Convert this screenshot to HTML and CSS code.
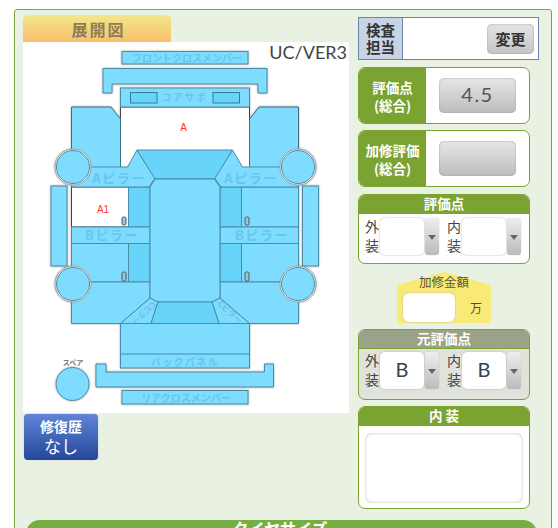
FILE: index.html
```html
<!DOCTYPE html>
<html lang="ja">
<head>
<meta charset="utf-8">
<title>展開図</title>
<link rel="stylesheet" href="styles.css">
</head>
<body>
<div class="panel">
  <div class="top">
    <div class="left">
      <div class="tab">展開図</div>
      <div class="diagram">
        <span class="ver">UC/VER3</span>
        <svg class="car" viewBox="23 42 326 371" width="326" height="371">
          <g class="parts">
            <rect x="122" y="51.5" width="126" height="12.5"/>
            <polygon points="103,68.5 267,68.5 267,93 258,93 258,84 112,84 112,93 103,93"/>
            <rect class="white" x="120.5" y="107" width="129" height="62"/>
            <rect x="120.5" y="88" width="129" height="19"/>
            <rect class="inner" x="130.5" y="92.5" width="26.5" height="10.5"/>
            <rect class="inner" x="213" y="92.5" width="26.5" height="10.5"/>
            <polygon class="edge" points="71.5,107 111,107 120.5,119 120.5,170 71.5,170"/>
            <polygon class="edge" points="298.5,107 259,107 249.5,119 249.5,170 298.5,170"/>
            <rect class="white" x="71.5" y="187" width="57" height="40"/>
            <rect x="241.5" y="187" width="57" height="40"/>
            <rect class="dark" x="128.5" y="187" width="21.5" height="40"/>
            <rect class="dark" x="220" y="187" width="21.5" height="40"/>
            <rect x="71.5" y="227" width="78.5" height="16.5"/>
            <rect x="220" y="227" width="78.5" height="16.5"/>
            <rect x="71.5" y="243.5" width="57" height="38.5"/>
            <rect x="241.5" y="243.5" width="57" height="38.5"/>
            <rect class="dark" x="128.5" y="243.5" width="21.5" height="38.5"/>
            <rect class="dark" x="220" y="243.5" width="21.5" height="38.5"/>
            <polygon points="71.5,282 150,282 150,298 120.5,323.5 71.5,323.5"/>
            <polygon points="298.5,282 220,282 220,298 249.5,323.5 298.5,323.5"/>
            <polygon points="71.5,167 127.5,167 137,150 155,178 149,187 71.5,187"/>
            <polygon points="298.5,167 242.5,167 232.5,150 214.5,178 221,187 298.5,187"/>
            <polygon class="dark" points="137,150 232.5,150 214.5,179 155,179"/>
            <polygon points="150,187 155,179 214.5,179 220,187 220,298 212,302 158,302 150,298"/>
            <polygon points="150,298 158,302 151,323.5 120.5,323.5"/>
            <polygon points="220,298 212,302 219,323.5 249.5,323.5"/>
            <polygon class="dark" points="158,302 212,302 219,323.5 151,323.5"/>
            <rect x="120.5" y="323.5" width="129" height="44.5"/>
            <line x1="120.5" y1="354" x2="249.5" y2="354"/>
            <polygon points="96,364 106,364 106,372 264.5,372 264.5,364 273.5,364 273.5,387 96,387"/>
            <rect x="122" y="390.5" width="126" height="13.5"/>
            <rect x="51" y="186" width="16" height="80"/>
            <rect x="302.5" y="186" width="16" height="80"/>
            <circle class="halo" cx="73" cy="167" r="18"/>
            <circle class="halo" cx="298" cy="167" r="18"/>
            <circle class="halo" cx="73" cy="284" r="18"/>
            <circle class="halo" cx="298" cy="284" r="18"/>
            <circle cx="73" cy="167" r="16.500"/>
            <circle cx="298" cy="167" r="16.500"/>
            <circle cx="73" cy="284" r="16.500"/>
            <circle cx="298" cy="284" r="16.500"/>
            <circle cx="72.5" cy="384" r="16.5"/>
            <rect class="knob" x="122" y="217" width="4" height="8" rx="1.500"/>
            <rect class="knob" x="245" y="217" width="4" height="8" rx="1.500"/>
            <rect class="knob" x="122" y="272" width="4" height="9" rx="1.500"/>
            <rect class="knob" x="245" y="272" width="4" height="9" rx="1.500"/>
          </g>
          <g class="labels">
            <text x="187" y="62" class="s10">フロントクロスメンバー</text>
            <text x="184.500" y="101" class="s10 wide">コアサポ</text>
            <text x="119" y="183" class="s13 wide">Aピラー</text>
            <text x="251" y="183" class="s13 wide">Aピラー</text>
            <text x="112" y="240" class="s13 wide">Bピラー</text>
            <text x="262" y="240" class="s13 wide">Bピラー</text>
            <text x="185" y="366" class="s10 wide">バックパネル</text>
            <text x="186" y="402" class="s10">リアクロスメンバー</text>
            <text x="142" y="311" class="s7" transform="rotate(138 142 311)">Cピラー</text>
            <text x="228" y="314" class="s7" transform="rotate(42 228 314)">Cピラー</text>
            <text x="73" y="365" class="spare">スペア</text>
          </g>
          <text x="183.500" y="131" class="mark">A</text>
          <text x="103" y="213" class="mark">A1</text>
        </svg>
      </div>
      <div class="repair"><b>修復歴</b><span>なし</span></div>
    </div>
    <div class="right">
      <div class="inspect">
        <div class="inspect-head">検査<br>担当</div>
        <div class="inspect-body"><div class="change">変更</div></div>
      </div>
      <div class="score">
        <div class="score-head">評価点<br>(総合)</div>
        <div class="score-body"><div class="score-btn">4.5</div></div>
      </div>
      <div class="score">
        <div class="score-head">加修評価<br>(総合)</div>
        <div class="score-body"><div class="score-btn"></div></div>
      </div>
      <div class="box">
        <div class="box-head">評価点</div>
        <div class="selects">
          <div class="field"><span class="side">外<br>装</span><div class="pick"><div class="value"></div><div class="arrow"></div></div></div>
          <div class="field"><span class="side">内<br>装</span><div class="pick"><div class="value"></div><div class="arrow"></div></div></div>
        </div>
      </div>
      <div class="amount">
        <svg class="house" viewBox="0 0 94 51" width="94" height="51"><polygon points="0,13 47,0 94,13 94,51 0,51"/></svg>
        <div class="amount-title">加修金額</div>
        <div class="amount-row"><div class="amount-input"></div><span>万</span></div>
      </div>
      <div class="box old">
        <div class="box-head">元評価点</div>
        <div class="selects">
          <div class="field"><span class="side">外<br>装</span><div class="pick"><div class="value">B</div><div class="arrow"></div></div></div>
          <div class="field"><span class="side">内<br>装</span><div class="pick"><div class="value">B</div><div class="arrow"></div></div></div>
        </div>
      </div>
      <div class="box interior">
        <div class="box-head">内 装</div>
        <div class="memo"></div>
      </div>
    </div>
  </div>
  <div class="tire">タイヤサイズ</div>
</div>
</body>
</html>
```
FILE: styles.css
```css
html, body { margin: 0; padding: 0; background: #fff; }
body { width: 558px; height: 528px; overflow: hidden; font-family: "Noto Sans CJK JP", "Liberation Sans", sans-serif; color: #444; }
.panel { box-sizing: border-box; width: 538px; height: 560px; margin: 9px 0 0 14px; padding: 5px 12px 0 8px; background: #e9f1e3; border: 1px solid #7aa53a; border-radius: 3px; }
.top { display: flex; gap: 9px; height: 501px; }
.left { width: 326px; }
.tab { width: 148px; height: 27px; box-sizing: border-box; padding-left: 3px; border-radius: 5px 5px 0 0; background: linear-gradient(#f3e78c, #f8bf6c); color: #8c7d55; font-size: 16px; font-weight: 700; line-height: 28px; text-align: center; letter-spacing: 2px; }
.diagram { position: relative; width: 326px; height: 371px; background: #fff; }
.ver { position: absolute; top: -1px; right: 2px; font-family: Lato, sans-serif; font-size: 18px; line-height: 22px; color: #444; }
.car { display: block; }
.parts { filter: drop-shadow(0 0 1px #aaa); }
.parts > * { fill: #7edcff; stroke: #4a8ba6; stroke-width: 1; }
.parts .dark { fill: #68d4fa; }
.parts .white { fill: #fff; stroke: #444; }
.parts .edge { stroke: #3a6f84; }
.parts .inner { fill: #68d4fa; stroke: #2d7f9c; }
.parts .knob { fill: #8fcbe0; stroke: #555; }
.parts .halo { fill: #fff; stroke: #999; }
.labels text { fill: #66c6ec; text-anchor: middle; font-weight: 700; }
.s10 { font-size: 10px; }
.s13 { font-size: 13px; }
.labels .s7 { font-size: 8px; fill: #6cc0de; }
.wide { letter-spacing: 1.5px; }
.labels .spare { fill: #777; font-size: 7px; }
.mark { fill: #f33; font-size: 10px; text-anchor: middle; font-family: "Liberation Sans", sans-serif; }
.repair { display: flex; flex-direction: column; align-items: center; box-sizing: border-box; width: 74px; height: 46px; margin: 1px 0 0 1px; padding-top: 3px; border-radius: 4px; background: linear-gradient(#5f84d8, #25479a); box-shadow: 0 0 1px #8899bb; color: #fff; }
.repair b { font-size: 14px; line-height: 18px; }
.repair span { font-size: 17px; line-height: 22px; }
.right { display: flex; flex-direction: column; width: 181px; align-items: flex-start; }
.inspect { display: flex; box-sizing: border-box; width: 181px; height: 43px; margin-top: 2px; border: 1px solid #6a86a6; background: #fff; }
.inspect-head { width: 44px; background: #c6d4e6; border-right: 1px solid #6a86a6; color: #333; font-size: 14.5px; font-weight: 700; line-height: 17px; text-align: center; padding-top: 3px; box-sizing: border-box; }
.inspect-body { flex: 1; display: flex; justify-content: flex-end; align-items: center; padding-right: 4px; }
.change { width: 47px; height: 30px; border-radius: 5px; background: linear-gradient(#e4e4e4, #c4c4c4); box-shadow: inset 0 0 2px #999; color: #333; font-size: 15px; font-weight: 700; line-height: 29px; text-align: center; }
.score { display: flex; box-sizing: border-box; width: 172px; height: 57px; margin-top: 7px; border: 1px solid #7aa332; border-radius: 7px; overflow: hidden; background: #fff; }
.score + .score { margin-top: 6px; }
.score-head { width: 67px; flex: none; display: flex; align-items: center; justify-content: center; text-align: center; background: #7aa332; color: #fff; font-size: 13.5px; font-weight: 700; line-height: 18px; }
.score-body { flex: 1; padding: 10px 0 0 13px; }
.score-btn { width: 77px; height: 35px; border-radius: 5px; background: linear-gradient(#e6e6e6, #bdbdbd); box-shadow: inset 0 0 2px #999; font-family: Lato, sans-serif; font-size: 20px; line-height: 33px; letter-spacing: 1.5px; text-align: center; color: #555; }
.box { box-sizing: border-box; width: 172px; margin-top: 7px; border: 1px solid #7aa332; border-radius: 7px; overflow: hidden; background: #fff; height: 70px; }
.box-head { height: 19px; background: #7aa332; color: #fff; font-size: 13.5px; font-weight: 700; line-height: 17px; text-align: center; }
.selects { display: flex; justify-content: space-between; padding: 4px 8px 0 6px; }
.field { display: flex; }
.side { width: 15px; font-size: 14px; line-height: 19px; color: #444; margin-top: -1px; }
.pick { display: flex; gap: 1px; width: 59px; height: 37px; }
.value { flex: 1; border-radius: 5px; background: #fff; box-shadow: 0 0 2px #aaa; font-family: Lato, sans-serif; font-size: 20px; line-height: 34px; text-align: center; color: #345; }
.arrow { position: relative; width: 14px; border-radius: 3px; background: linear-gradient(#eee, #bbb); box-shadow: 0 0 1px #999; }
.arrow::after { content: ""; position: absolute; left: 3px; top: 17px; border: 4px solid transparent; border-top: 5px solid #666; border-bottom: 0; }
.amount { position: relative; width: 94px; height: 51px; margin: 8px 0 0 39px; }
.house { position: absolute; top: 0; left: 0; }
.house polygon { fill: #f9ea77; }
.amount-title { position: relative; font-size: 12.5px; line-height: 16px; text-align: center; color: #5a5536; padding-top: 2px; }
.amount-row { position: relative; display: flex; align-items: center; margin: 3px 0 0 6px; }
.amount-input { width: 52px; height: 29px; border-radius: 6px; background: #fff; box-shadow: 0 0 2px #aaa; }
.amount-row span { margin-left: 15px; font-size: 12px; color: #5a4a30; }
.amount + .box { margin-top: 6px; }
.old { height: 71px; background: #e0e2dc; }
.old .box-head { background: #9ba386; height: 18px; border-bottom: 1px solid #7aa332; box-sizing: content-box; }
.old .selects { padding-top: 3px; }
.interior { height: 103px; margin-top: 6px; }
.memo { height: 70px; margin: 7px 6px 0 6px; border-radius: 7px; background: #fff; box-shadow: inset 0 0 3px #bbb; }
.tire { height: 40px; margin: 4px 2px 0 3px; border-radius: 14px 14px 0 0; background: #76ae42; color: #fff; font-size: 16px; font-weight: 700; line-height: 17px; text-align: center; padding-right: 3px; }
```
